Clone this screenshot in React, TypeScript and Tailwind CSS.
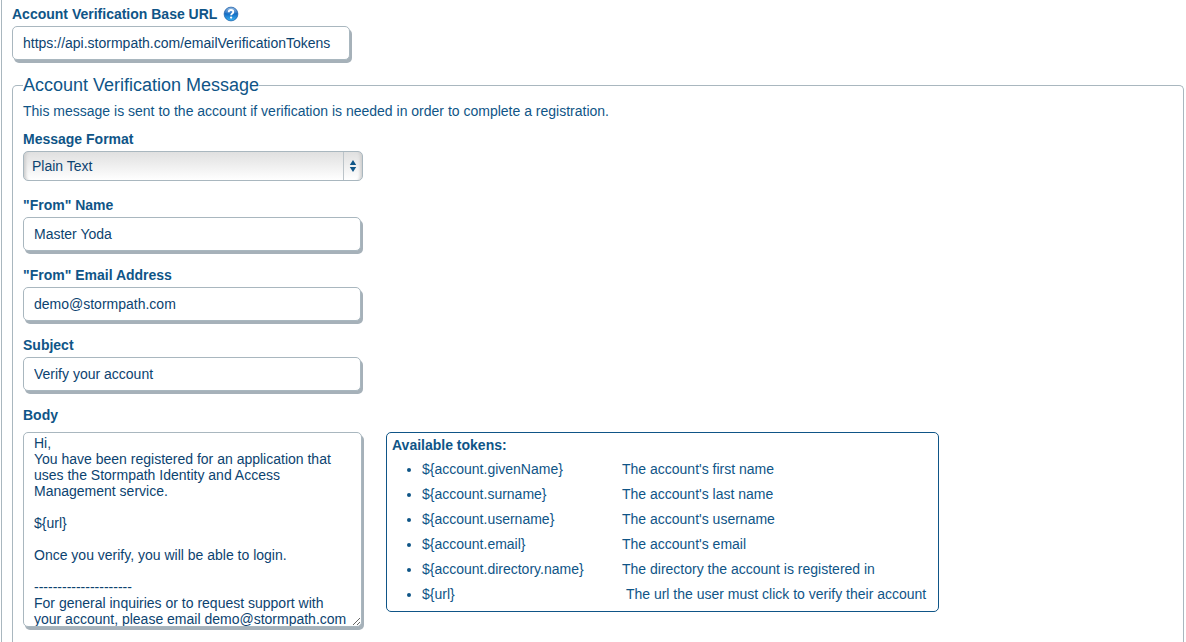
import { useState } from 'react';
import type { ReactNode } from 'react';

const tokens = [
  { name: '${account.givenName}', description: "The account's first name" },
  { name: '${account.surname}', description: "The account's last name" },
  { name: '${account.username}', description: "The account's username" },
  { name: '${account.email}', description: "The account's email" },
  { name: '${account.directory.name}', description: 'The directory the account is registered in' },
  { name: '${url}', description: '\u00a0The url the user must click to verify their account' },
];

const defaultBody = `Hi,
You have been registered for an application that uses the Stormpath Identity and Access Management service.

\${url}

Once you verify, you will be able to login.

---------------------
For general inquiries or to request support with your account, please email demo@stormpath.com`;

function HelpIcon() {
  return (
    <svg width="16" height="16" viewBox="0 0 16 16" aria-hidden="true">
      <defs>
        <linearGradient id="help-fill" x1="0" y1="0" x2="0" y2="1">
          <stop offset="0" stopColor="#3f83c9" />
          <stop offset="0.45" stopColor="#1067c0" />
          <stop offset="1" stopColor="#3bb4f5" />
        </linearGradient>
        <linearGradient id="help-shine" x1="0" y1="0" x2="0" y2="1">
          <stop offset="0" stopColor="#fff" stopOpacity="0.45" />
          <stop offset="1" stopColor="#fff" stopOpacity="0.05" />
        </linearGradient>
      </defs>
      <circle cx="8" cy="8" r="6.9" fill="url(#help-fill)" stroke="#1c5ca3" strokeWidth="0.7" />
      <path d="M2 7a6 5.6 0 0 1 12 0C11 8.6 5 8.6 2 7Z" fill="url(#help-shine)" />
      <path
        d="M5.7 6.2C5.7 4.7 6.7 4 8 4s2.3.7 2.3 1.9c0 1.5-2.2 1.6-2.2 3.4"
        fill="none"
        stroke="#fff"
        strokeWidth="1.8"
      />
      <circle cx="8.1" cy="11.6" r="1.15" fill="#fff" />
    </svg>
  );
}

function Field({ id, label, help, children }: { id: string; label: string; help?: ReactNode; children: ReactNode }) {
  return (
    <div className="flex flex-col gap-0.5">
      <div className="flex items-center gap-1.5">
        <label htmlFor={id} className="font-bold leading-5">
          {label}
        </label>
        {help}
      </div>
      {children}
    </div>
  );
}

function TextInput({ id, value }: { id: string; value: string }) {
  const [text, setText] = useState(value);
  return (
    <input
      id={id}
      type="text"
      value={text}
      onChange={(e) => setText(e.target.value)}
      className="h-[34px] w-[338px] max-w-full rounded-[5px] border border-[#a9b7bf] bg-white px-2.5 text-[#0c4370] shadow-[2px_3px_0_#a6b1b9] outline-none"
    />
  );
}

export default function App() {
  const [body, setBody] = useState(defaultBody);
  return (
    <main className="ml-px flex min-h-screen flex-col border-l border-[#a9b7bf] bg-white pt-1 pr-0.5 pl-2.5 font-['Liberation_Sans',Arial,sans-serif] text-sm text-[#0f5587]">
      <Field
        id="base-url"
        label="Account Verification Base URL"
        help={
          <button type="button" aria-label="Help">
            <HelpIcon />
          </button>
        }
      >
        <TextInput id="base-url" value="https://api.stormpath.com/emailVerificationTokens" />
      </Field>

      <fieldset className="mt-[15px] min-w-0 flex-1 rounded-t-[5px] border border-b-0 border-[#a9b7bf] px-2.5">
        <legend className="text-lg leading-5">Account Verification Message</legend>
        <p className="mt-1.5 leading-5">
          This message is sent to the account if verification is needed in order to complete a registration.
        </p>

        <div className="mt-2 flex flex-col gap-3.5">
          <Field id="format" label="Message Format">
            <div className="relative w-[340px] max-w-full">
              <select
                id="format"
                className="block h-[30px] w-full appearance-none rounded-[5px] border border-[#a9b7bf] bg-linear-to-b from-[#e0e0e0] to-white px-2 text-[#0c4370] shadow-[inset_5px_0_3px_-3px_#cfcfcf,inset_-5px_0_3px_-3px_#cfcfcf] outline-none"
              >
                <option>Plain Text</option>
                <option>HTML</option>
              </select>
              <span className="pointer-events-none absolute inset-y-px right-px flex w-[19px] items-center justify-center border-l border-[#bcc4c9]">
                <svg width="8" height="14" viewBox="0 0 8 14" fill="#0f5587" aria-hidden="true">
                  <path d="M4 1 7.2 6H.8ZM4 13 .8 8h6.4Z" />
                </svg>
              </span>
            </div>
          </Field>
          <Field id="from-name" label={'"From" Name'}>
            <TextInput id="from-name" value="Master Yoda" />
          </Field>
          <Field id="from-email" label={'"From" Email Address'}>
            <TextInput id="from-email" value="demo@stormpath.com" />
          </Field>
          <Field id="subject" label="Subject">
            <TextInput id="subject" value="Verify your account" />
          </Field>
          <Field id="body" label="Body">
            <div className="mt-[5px] flex items-start gap-6">
              <textarea
                id="body"
                value={body}
                onChange={(e) => setBody(e.target.value)}
                className="block h-[195px] w-[339px] shrink-0 resize overflow-hidden rounded-[5px] border border-[#a9b7bf] bg-white px-2.5 pt-0.5 leading-4 text-[#0c4370] shadow-[2px_3px_0_#a6b1b9] outline-none"
              />
              <section className="w-[553px] rounded-[5px] border border-[#0f5587] px-[5px] pt-0.5 pb-1">
                <h2 className="font-bold leading-5">Available tokens:</h2>
                <ul className="mt-0.5 list-disc pl-[30px]">
                  {tokens.map((token) => (
                    <li key={token.name} className="leading-[25px]">
                      <div className="flex whitespace-nowrap">
                        <span className="w-[200px]">{token.name}</span>
                        <span>{token.description}</span>
                      </div>
                    </li>
                  ))}
                </ul>
              </section>
            </div>
          </Field>
        </div>
      </fieldset>
    </main>
  );
}
